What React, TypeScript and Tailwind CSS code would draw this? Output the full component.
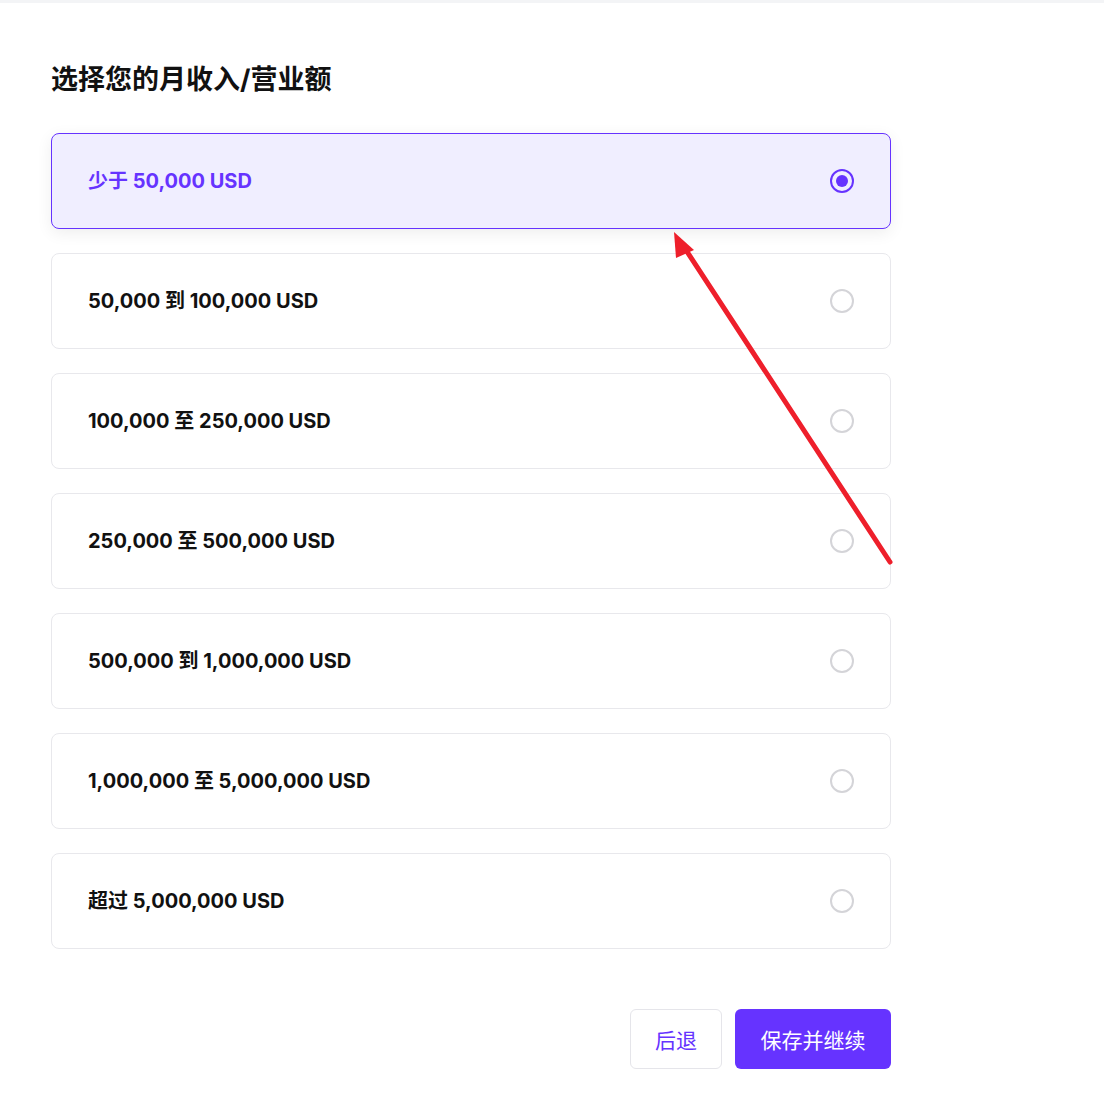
import React, { useState } from "react";

const options = [
  "少于 50,000 USD",
  "50,000 到 100,000 USD",
  "100,000 至 250,000 USD",
  "250,000 至 500,000 USD",
  "500,000 到 1,000,000 USD",
  "1,000,000 至 5,000,000 USD",
  "超过 5,000,000 USD",
];

export default function App() {
  const [sel, setSel] = useState(0);
  return (
    <div
      className="relative min-h-[1095px] bg-white"
      style={{ fontFamily: 'Inter, "Noto Sans CJK SC", sans-serif' }}
    >
      <div className="h-[3px] bg-[#f3f4f6]" />
      <div className="pl-[51px] pt-[61px] w-[891px]">
        <h1 className="text-[27px] leading-[32px] font-bold text-[#111111] mb-[37px]">
          选择您的月收入/营业额
        </h1>
        <div className="flex flex-col gap-[24px]">
          {options.map((o, i) => {
            const active = i === sel;
            return (
              <button
                key={o}
                onClick={() => setSel(i)}
                className={
                  active
                    ? "h-[96px] flex items-center justify-between pl-[36px] pr-[36px] rounded-[8px] border border-[#6633ff] bg-[#f0eeff] shadow-[0_4px_16px_rgba(0,0,0,0.07)] text-left"
                    : "h-[96px] flex items-center justify-between pl-[36px] pr-[36px] rounded-[8px] border border-[#e8e8ec] bg-white text-left"
                }
              >
                <span
                  className={
                    active
                      ? "text-[20px] font-bold text-[#6633ff]"
                      : "text-[20px] font-bold text-[#111111]"
                  }
                >
                  {o}
                </span>
                {active ? (
                  <span className="w-[24px] h-[24px] rounded-full border-[2.5px] border-[#6633ff] flex items-center justify-center">
                    <span className="w-[12px] h-[12px] rounded-full bg-[#6633ff]" />
                  </span>
                ) : (
                  <span className="w-[24px] h-[24px] rounded-full border-[2px] border-[#d4d4d8]" />
                )}
              </button>
            );
          })}
        </div>
        <div className="flex justify-end gap-[13px] mt-[60px]">
          <button className="w-[92px] h-[60px] pt-[3px] rounded-[6px] border border-[#e5e5ea] bg-white text-[21px] text-[#6633ff]">
            后退
          </button>
          <button className="w-[156px] h-[60px] pt-[3px] rounded-[6px] bg-[#6633ff] text-[21px] text-white">
            保存并继续
          </button>
        </div>
      </div>
      <svg
        className="absolute left-0 top-0 pointer-events-none"
        width="1104"
        height="1095"
        viewBox="0 0 1104 1095"
      >
        <line
          x1="890"
          y1="562"
          x2="684"
          y2="247"
          stroke="#ee1f2b"
          strokeWidth="5"
          strokeLinecap="round"
        />
        <polygon points="674,232 694,250 676,258" fill="#ee1f2b" />
      </svg>
    </div>
  );
}
